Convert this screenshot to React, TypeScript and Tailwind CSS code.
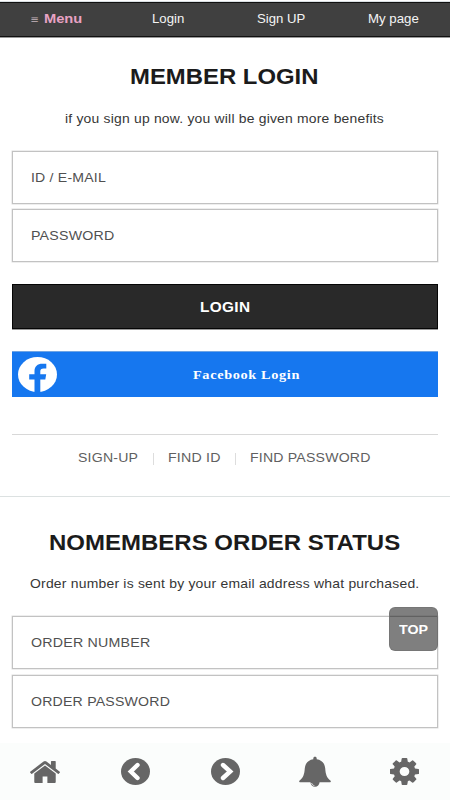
import React from "react";

const sans = "font-['Liberation_Sans',Arial,sans-serif]";

function Line({ width, className, children }: { width: number; className: string; children: string }) {
  // Stretches one line of text over an exact measure.
  const ref = React.useRef<HTMLSpanElement>(null);
  const [scale, setScale] = React.useState(1);
  React.useLayoutEffect(() => {
    if (ref.current) setScale(width / ref.current.offsetWidth);
  }, []);
  return (
    <span className={`inline-block text-left whitespace-nowrap ${className}`} style={{ width: `${width}px` }}>
      <span ref={ref} className="inline-block origin-left" style={{ transform: `scaleX(${scale})` }}>{children}</span>
    </span>
  );
}

function Field({ label, width, className }: { label: string; width: number; className: string }) {
  return (
    <div className={`mx-3 flex h-[53px] shrink-0 items-center border border-[#c2c2c2] bg-white pl-[18px] shadow-[0_0_0_0.5px_#dedede] ${className}`}>
      <Line width={width} className="text-[13.5px] leading-5 tracking-[0.2px] text-[#505050]">{label}</Line>
    </div>
  );
}

function Home() {
  return (
    <svg viewBox="90 253 1612 1283" preserveAspectRatio="none" className="h-[22px] w-[30px] fill-[#666]">
      <path d="M1472 992v480q0 26-19 45t-45 19h-384v-384h-256v384h-384q-26 0-45-19t-19-45v-480q0-1 .5-3t.5-3l575-474 575 474q1 2 1 6zm223-69l-62 74q-8 9-21 11h-3q-13 0-21-7l-692-577-692 577q-12 8-24 7-13-2-21-11l-62-74q-8-10-7-23.5t11-21.5l719-599q32-26 76-26t76 26l244 204v-195q0-14 9-23t23-9h192q14 0 23 9t9 23v408l219 182q10 8 11 21.5t-7 23.5z" />
    </svg>
  );
}

function Chevron({ d }: { d: string }) {
  return (
    <svg viewBox="0 0 29 27" className="h-[27px] w-[29px]">
      <ellipse cx="14.5" cy="13.5" rx="14.5" ry="13.4" fill="#666" />
      <path d={d} fill="none" stroke="#fff" strokeWidth="4.4" strokeLinecap="round" strokeLinejoin="miter" />
    </svg>
  );
}

function Bell() {
  return (
    <svg viewBox="0 0 32 32" className="h-8 w-8 fill-[#666]">
      <path d="M16 .8c1.1 0 1.7.7 1.7 1.6v.8c5.2.8 8 4.1 8.5 9.1.4 5.7 1.3 9.3 5.4 12.500.4.4.3 1.400-.5 1.400H20.600c-.3 2.700-2 4.600-4.600 4.600s-4.300-1.900-4.600-4.600H.9c-.8 0-.9-1-.5-1.400 4.100-3.200 5-6.800 5.400-12.500.5-5 3.300-8.300 8.500-9.100v-.8c0-.9.600-1.600 1.700-1.600z" />
      <path d="M12.600 27c.3 1.500 1.300 2.400 2.800 2.600" fill="none" stroke="#fff" strokeWidth=".8" />
    </svg>
  );
}

function Gear() {
  return (
    <svg viewBox="128 128 1536 1536" preserveAspectRatio="none" className="mr-px h-[27px] w-[29px] fill-[#666]">
      <path d="M1152 896q0-106-75-181t-181-75-181 75-75 181 75 181 181 75 181-75 75-181zm512-109v222q0 12-8 23t-20 13l-185 28q-19 54-39 91 35 50 107 138 10 12 10 25t-9 23q-27 37-99 108t-94 71q-12 0-26-9l-138-108q-44 23-91 38-16 136-29 186-7 28-36 28h-222q-14 0-24.500-8.500t-11.500-21.500l-28-184q-49-16-90-37l-141 107q-10 9-25 9-14 0-25-11-126-114-165-168-7-10-7-23 0-12 8-23 15-21 51-66.500t54-70.500q-27-50-41-99l-183-27q-13-2-21-12.500t-8-23.500v-222q0-12 8-23t19-13l186-28q14-46 39-92-40-57-107-138-10-12-10-24 0-10 9-23 26-36 98.500-107.500t94.500-71.500q13 0 26 10l138 107q44-23 91-38 16-136 29-186 7-28 36-28h222q14 0 24.500 8.500t11.500 21.500l28 184q49 16 90 37l142-107q9-9 24-9 13 0 25 10 129 119 165 170 7 8 7 22 0 12-8 23-15 21-51 66.500t-54 70.500q26 50 41 98l183 28q13 2 21 12.500t8 23.500z" />
    </svg>
  );
}

export default function App() {
  return (
    <div className={`relative flex h-[800px] w-[450px] flex-col overflow-hidden bg-white ${sans}`}>
      <div className="h-0.5 shrink-0 border-b border-[#d9dfe3]" />
      <nav className="flex h-[35px] shrink-0 border-t border-b border-[#111] bg-[#404040] text-[13px] leading-8 text-[#f4f4f4] shadow-[0_1px_0_#999]">
        <div className="flex w-[112px] pl-[31px]">
          <Line width={8} className="mr-[5px] text-[10px] leading-[34px] text-[#c7b5bd]">≡</Line>
          <Line width={38} className="text-[13.5px] font-bold text-[#e8a2c4]">Menu</Line>
        </div>
        <div className="w-[113px] text-center"><Line width={32.5} className="">Login</Line></div>
        <div className="w-[112px] text-center"><Line width={48.5} className="">Sign UP</Line></div>
        <div className="w-[113px] text-center"><Line width={51} className="">My page</Line></div>
      </nav>

      <h1 className="mt-6 h-8 shrink-0 pr-px text-center font-bold text-[#1b1b1b]">
        <Line width={189} className="text-[22.5px] leading-8">MEMBER LOGIN</Line>
      </h1>
      <p className="mt-[13px] h-5 shrink-0 text-center text-[#363636]">
        <Line width={319.5} className="text-[13px] leading-5 tracking-[0.2px]">if you sign up now. you will be given more benefits</Line>
      </p>
      <Field label="ID / E-MAIL" width={75} className="mt-[25px]" />
      <Field label="PASSWORD" width={83} className="mt-[5px]" />

      <button className="mx-3 mt-[22px] h-[45px] shrink-0 border border-[#050505] bg-[#292929] font-bold text-white shadow-[0_1px_0_#999]">
        <Line width={50.5} className="text-[14px] leading-5 tracking-[0.3px]">LOGIN</Line>
      </button>
      <button className="mx-3 mt-[22px] flex h-[46px] shrink-0 items-center border-t border-[#6fa4e3] bg-[#1677ef] pl-1.5 text-left text-white">
        <svg viewBox="0 0 39 35" className="h-[35px] w-[39px]">
          <ellipse cx="19.5" cy="17.5" rx="19.5" ry="17.5" fill="#fff" />
          <path d="M16.500 35V22.500h-5.300v-5.200h5.300v-3.200c0-4.700 3-7.300 7.800-7.300h4v4.800h-2.600c-2.600 0-3.400 1.100-3.400 2.900v2.800h5.900l-.9 5.200h-5V35z" fill="#1677ef" />
        </svg>
        <Line width={107} className="ml-[136px] font-['Liberation_Serif','Times_New_Roman',serif] text-[13.5px] leading-5 font-bold tracking-[0.6px]">Facebook Login</Line>
      </button>

      <div className="mx-3 mt-[37px] flex h-[46px] shrink-0 items-center border-t border-[#d8d8d8] pl-[66px] text-[#606060]">
        <Line width={60.5} className="text-[13.5px] leading-5 tracking-[0.2px]">SIGN-UP</Line>
        <i className="mt-[3px] ml-[14.5px] h-3 w-px bg-[#ddd]" />
        <Line width={52.5} className="ml-[14px] text-[13.5px] leading-5 tracking-[0.2px]">FIND ID</Line>
        <i className="mt-[3px] ml-[14.5px] h-3 w-px bg-[#ddd]" />
        <Line width={121} className="ml-[14px] text-[13.5px] leading-5 tracking-[0.2px]">FIND PASSWORD</Line>
      </div>

      <section className="mt-[16px] flex flex-col border-t border-[#dce1e1]">
        <h2 className="mt-[30px] h-8 pr-px text-center font-bold text-[#1b1b1b]">
          <Line width={351} className="text-[22.5px] leading-8">NOMEMBERS ORDER STATUS</Line>
        </h2>
        <p className="mt-[12px] h-5 text-center text-[#363636]">
          <Line width={390} className="text-[13px] leading-5 tracking-[0.2px]">Order number is sent by your email address what purchased.</Line>
        </p>
        <Field label="ORDER NUMBER" width={119} className="mt-[25px]" />
        <Field label="ORDER PASSWORD" width={139} className="mt-[6px]" />
      </section>

      <button className="absolute top-[607px] left-[389px] h-11 w-[49px] rounded-md border border-[#747474]/80 bg-black/50 font-bold text-white">
        <Line width={29.5} className="text-[13.5px] leading-5">TOP</Line>
      </button>

      <footer className="mt-auto grid h-[57px] shrink-0 grid-cols-5 place-items-center bg-[#fbfdfc]">
        <Home />
        <Chevron d="M16.5 7 L9.8 13.5 L16.5 20" />
        <Chevron d="M12 7 L19.2 13.5 L12 20" />
        <Bell />
        <Gear />
      </footer>
    </div>
  );
}
